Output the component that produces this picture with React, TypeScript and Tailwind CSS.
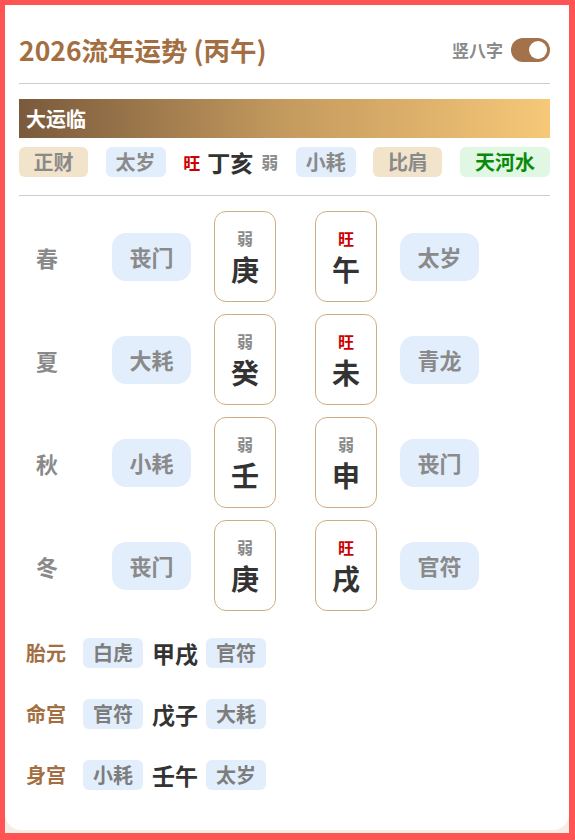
import React from 'react';

type Tone = 'blue' | 'beige' | 'green';

const toneClass: Record<Tone, string> = {
  blue: 'bg-[#e2eefc] text-[#8a8a8a]',
  beige: 'bg-[#f2e4cb] text-[#8a8a8a]',
  green: 'bg-[#e0f7e3] text-[#0a8a0a]',
};

const topTags: { label: string; tone: Tone; w: string }[] = [
  { label: '正财', tone: 'beige', w: 'w-[69px]' },
  { label: '太岁', tone: 'blue', w: 'w-[60px]' },
];

const topTagsRight: { label: string; tone: Tone; w: string }[] = [
  { label: '小耗', tone: 'blue', w: 'w-[60px]' },
  { label: '比肩', tone: 'beige', w: 'w-[69px]' },
  { label: '天河水', tone: 'green', w: 'w-[90px]' },
];

const seasons = [
  { name: '春', left: '丧门', stem: '庚', stemState: '弱', branch: '午', branchState: '旺', right: '太岁' },
  { name: '夏', left: '大耗', stem: '癸', stemState: '弱', branch: '未', branchState: '旺', right: '青龙' },
  { name: '秋', left: '小耗', stem: '壬', stemState: '弱', branch: '申', branchState: '弱', right: '丧门' },
  { name: '冬', left: '丧门', stem: '庚', stemState: '弱', branch: '戌', branchState: '旺', right: '官符' },
];

const palaces = [
  { name: '胎元', left: '白虎', pillar: '甲戌', right: '官符' },
  { name: '命宫', left: '官符', pillar: '戊子', right: '大耗' },
  { name: '身宫', left: '小耗', pillar: '壬午', right: '太岁' },
];

function StateMark({ state, size = 'text-[16px]' }: { state: string; size?: string }) {
  return (
    <span className={`${size} leading-none font-bold ${state === '旺' ? 'text-[#cc0000]' : 'text-[#8a8a8a]'}`}>
      {state}
    </span>
  );
}

function PillarBox({ state, char }: { state: string; char: string }) {
  return (
    <div className="w-[62px] h-[91px] shrink-0 border border-[#cfae82] rounded-[12px] flex flex-col items-center justify-center gap-[9px]">
      <StateMark state={state} />
      <span className="text-[28px] leading-none font-semibold text-[#333333]">{char}</span>
    </div>
  );
}

function SeasonTag({ label }: { label: string }) {
  return (
    <div className="w-[79px] h-[48px] shrink-0 rounded-[14px] bg-[#e2eefc] flex items-center justify-center text-[22px] font-bold text-[#8a8a8a]">
      {label}
    </div>
  );
}

function SmallTag({ label }: { label: string }) {
  return (
    <div className="w-[60px] h-[30px] shrink-0 rounded-[6px] bg-[#e2eefc] flex items-center justify-center text-[20px] font-semibold text-[#7d7d7d]">
      {label}
    </div>
  );
}

export default function App() {
  return (
    <div
      className="h-[840px] w-full flex flex-col border-t-[5px] border-l-[5px] border-r-[6px] border-b-[7px] border-[#ff5454] bg-[#f5eee4]"
      style={{ fontFamily: '"Noto Sans CJK SC", "Noto Sans", sans-serif' }}
    >
      <div className="flex-1 flex flex-col pb-[3px]">
        <div className="flex-1 bg-white rounded-b-[16px] pl-[14px] pr-[19px]">
          {/* header */}
          <div className="mt-[23px] h-[44px] flex items-center justify-between">
            <h1 className="text-[26.5px] leading-none font-bold text-[#a36f42]">2026流年运势 (丙午)</h1>
            <div className="flex items-center gap-[8px]">
              <span className="text-[17px] font-bold text-[#8a8a8a]">竖八字</span>
              <div className="w-[39px] h-[24px] rounded-full bg-[#a3714a] flex items-center justify-end pr-[3px]">
                <div className="w-[18px] h-[18px] rounded-full bg-white" />
              </div>
            </div>
          </div>

          <div className="mt-[11px] h-px bg-[#cccccc]" />

          {/* 大运临 */}
          <div className="mt-[15px] h-[39px] flex items-center pl-[7px] bg-gradient-to-r from-[#7a5a3c] via-[#c49a5e] to-[#f6c878]">
            <span className="text-[20px] font-bold text-white">大运临</span>
          </div>

          <div className="mt-[9px] h-[30px] flex items-center justify-between">
            {topTags.map((t) => (
              <div key={t.label} className={`${t.w} h-[30px] rounded-[6px] flex items-center justify-center text-[20px] font-bold ${toneClass[t.tone]}`}>
                {t.label}
              </div>
            ))}
            <div className="flex items-center">
              <StateMark state="旺" size="text-[17px]" />
              <span className="ml-[7px] text-[23px] leading-none font-bold text-[#333333]">丁亥</span>
              <span className="ml-[8px]"><StateMark state="弱" size="text-[17px]" /></span>
            </div>
            {topTagsRight.map((t) => (
              <div key={t.label} className={`${t.w} h-[30px] rounded-[6px] flex items-center justify-center text-[20px] font-bold ${toneClass[t.tone]}`}>
                {t.label}
              </div>
            ))}
          </div>

          <div className="mt-[18px] h-px bg-[#cccccc]" />

          {/* seasons */}
          <div className="mt-[15px] flex flex-col gap-[12px]">
            {seasons.map((s) => (
              <div key={s.name} className="flex items-center pl-[17px]">
                <span className="w-[22px] text-[22px] font-bold text-[#8a8a8a] leading-none">{s.name}</span>
                <div className="ml-[54px]"><SeasonTag label={s.left} /></div>
                <div className="ml-[23px]"><PillarBox state={s.stemState} char={s.stem} /></div>
                <div className="ml-[39px]"><PillarBox state={s.branchState} char={s.branch} /></div>
                <div className="ml-[23px]"><SeasonTag label={s.right} /></div>
              </div>
            ))}
          </div>

          {/* palaces */}
          <div className="mt-[27px] flex flex-col gap-[31px]">
            {palaces.map((p) => (
              <div key={p.name} className="h-[30px] flex items-center pl-[7px]">
                <span className="w-[41px] text-[20px] font-bold text-[#a36f42] leading-none">{p.name}</span>
                <div className="ml-[16px]"><SmallTag label={p.left} /></div>
                <span className="ml-[9px] w-[46px] text-[23px] font-bold text-[#333333] leading-none">{p.pillar}</span>
                <div className="ml-[8px]"><SmallTag label={p.right} /></div>
              </div>
            ))}
          </div>
        </div>
      </div>
    </div>
  );
}
